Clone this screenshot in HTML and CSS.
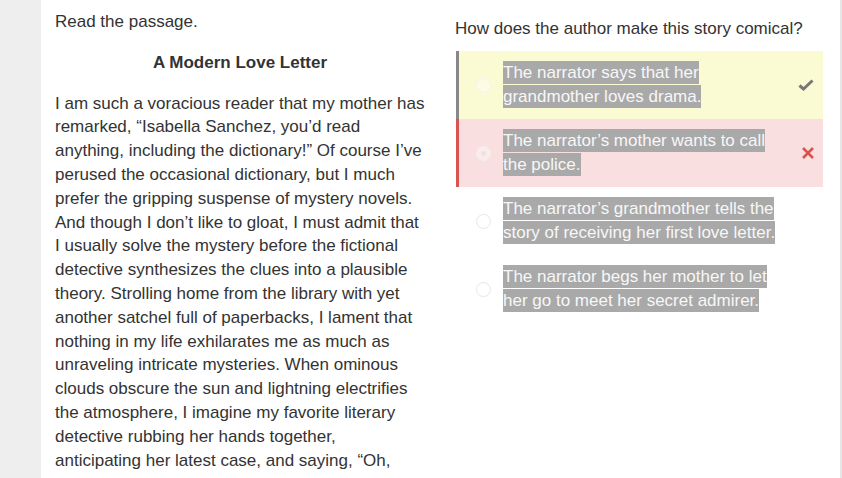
FILE: index.html
```html
<!DOCTYPE html>
<html>
<head>
<meta charset="utf-8">
<link rel="stylesheet" href="styles.css">
</head>
<body>
<div class="page">
  <div class="sidebar"></div>
  <div class="main">
    <div class="passage">
      <p class="intro">Read the passage.</p>
      <h2 class="title">A Modern Love Letter</h2>
      <p class="body-text">I am such a voracious reader that my mother has remarked, “Isabella Sanchez, you’d read anything, including the dictionary!” Of course I’ve perused the occasional dictionary, but I much prefer the gripping suspense of mystery novels. And though I don’t like to gloat, I must admit that I usually solve the mystery before the fictional detective synthesizes the clues into a plausible theory. Strolling home from the library with yet another satchel full of paperbacks, I lament that nothing in my life exhilarates me as much as unraveling intricate mysteries. When ominous clouds obscure the sun and lightning electrifies the atmosphere, I imagine my favorite literary detective rubbing her hands together, anticipating her latest case, and saying, “Oh,</p>
    </div>
    <div class="question">
      <p class="prompt">How does the author make this story comical?</p>
      <div class="options">
        <div class="option correct">
          <span class="radio"></span>
          <span class="label"><span class="hl">The narrator says that her grandmother loves drama.</span></span>
          <svg class="mark check" width="16" height="12" viewBox="0 0 16 12"><path d="M1.5 6.5 L5.5 10 L14.5 1.5" fill="none" stroke="#777" stroke-width="3"/></svg>
        </div>
        <div class="option wrong">
          <span class="radio selected"></span>
          <span class="label"><span class="hl">The narrator’s mother wants to call the police.</span></span>
          <svg class="mark cross" width="14" height="14" viewBox="0 0 14 14"><path d="M2 2 L12 12 M12 2 L2 12" fill="none" stroke="#d9534f" stroke-width="2.6"/></svg>
        </div>
        <div class="option">
          <span class="radio"></span>
          <span class="label"><span class="hl">The narrator’s grandmother tells the story of receiving her first love letter.</span></span>
        </div>
        <div class="option">
          <span class="radio"></span>
          <span class="label"><span class="hl">The narrator begs her mother to let her go to meet her secret admirer.</span></span>
        </div>
      </div>
    </div>
  </div>
  <div class="edge"></div>
</div>
</body>
</html>
```
FILE: styles.css
```css
html, body {
  margin: 0;
  padding: 0;
  height: 100%;
  overflow: hidden;
  background: #ffffff;
}
body {
  font-family: "Liberation Sans", Arial, sans-serif;
  color: #333333;
  font-size: 17px;
  line-height: 1.4;
}
.page {
  display: flex;
  height: 478px;
  overflow: hidden;
}
.sidebar {
  width: 41px;
  flex: none;
  background: #eeeeee;
}
.edge {
  width: 2px;
  flex: none;
  background: #e6e6e6;
}
.main {
  flex: 1;
  display: flex;
  gap: 30px;
  padding: 10px 0 0 14px;
  overflow: hidden;
}
.passage {
  width: 370px;
  flex: none;
}
.intro {
  margin: 0;
}
.title {
  margin: 17px 0 0;
  font-size: 17px;
  font-weight: bold;
  text-align: center;
  line-height: 1.4;
}
.body-text {
  margin: 17px 0 0;
}
.question {
  width: 368px;
  flex: none;
  padding-top: 7px;
}
.prompt {
  margin: 0 0 10px;
  line-height: 24px;
}
.option {
  display: flex;
  align-items: center;
  padding: 10px 0 10px 17px;
  border-left: 3px solid transparent;
  margin-left: 1px;
  min-height: 48px;
  line-height: 24px;
  position: relative;
}
.option.correct {
  background: #fbfbd3;
  border-left-color: #888888;
}
.option.wrong {
  background: #f9dfdf;
  border-left-color: #d9534f;
}
.radio {
  width: 13px;
  height: 13px;
  border-radius: 50%;
  border: 1px solid #e2e2e2;
  background: #ffffff;
  flex: none;
  margin-right: 12px;
  position: relative;
  opacity: 0.8;
}
.correct .radio, .wrong .radio {
  background: rgba(255, 255, 255, 0.5);
  border-color: #f2f2f2;
}
.radio.selected::after {
  content: "";
  position: absolute;
  left: 4px;
  top: 4px;
  width: 5px;
  height: 5px;
  border-radius: 50%;
  background: #e6e6e6;
}
.label {
  width: 280px;
  flex: none;
}
.hl {
  background: #a9a9a9;
  color: #f7f7f7;
  padding: 2px 0;
}
.mark {
  position: absolute;
  top: 50%;
  transform: translateY(-50%);
}
.check {
  right: 9px;
}
.cross {
  right: 8px;
}
```
